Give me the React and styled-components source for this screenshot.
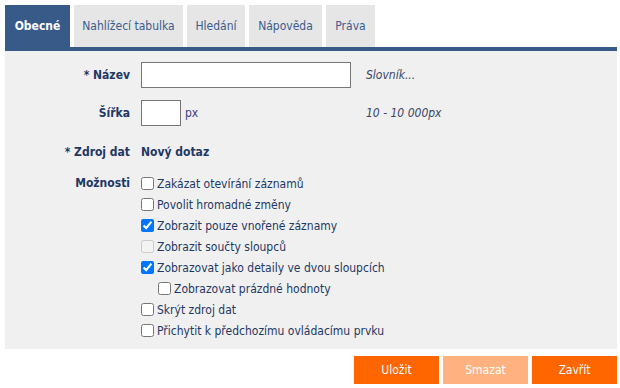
import React from "react";
import styled, { createGlobalStyle } from "styled-components";

const Global = createGlobalStyle`
  html, body { margin: 0; padding: 0; background: #ffffff; }
  body {
    font-family: "DejaVu Sans Condensed", "Liberation Sans", Arial, sans-serif;
    font-size: 12px;
    color: #1f3864;
  }
`;

const Page = styled.div`
  width: 612px;
  padding: 5px 3px 4px 5px;
`;

const TabStrip = styled.div`
  display: flex;
  gap: 4px;
  border-bottom: 4px solid #385a88;
`;

const Tab = styled.div`
  height: 42px;
  width: ${(p) => p.$w}px;
  flex: none;
  display: flex;
  align-items: center;
  justify-content: center;
  white-space: nowrap;
  box-sizing: border-box;
  background: ${(p) => (p.$active ? "#385a88" : "#e6e6e6")};
  color: ${(p) => (p.$active ? "#ffffff" : "#3b5c8c")};
  font-weight: ${(p) => (p.$active ? 700 : 400)};
`;

const Panel = styled.div`
  background: #f0f0f0;
  padding: 11px 0 8px 0;
  display: flex;
  flex-direction: column;
`;

const Row = styled.div`
  display: grid;
  grid-template-columns: 125px 1fr;
  column-gap: 11px;
  align-items: ${(p) => (p.$top ? "start" : "center")};
  min-height: 26px;
  margin-bottom: ${(p) => p.$mb || 0}px;
`;

const Label = styled.div`
  text-align: right;
  font-weight: 700;
  color: #1f3864;
  line-height: ${(p) => (p.$lh ? p.$lh + "px" : "normal")};
`;

const Field = styled.div`
  display: flex;
  align-items: center;
`;

const FieldBox = styled.div`
  width: 210px;
  display: flex;
  align-items: center;
  gap: 4px;
`;

const TextInput = styled.input`
  width: ${(p) => p.$w}px;
  height: 26px;
  box-sizing: border-box;
  border: 1px solid #767676;
  background: #fff;
  margin: 0;
  padding: 2px 4px;
  font: inherit;
  outline: none;
`;

const Unit = styled.span`
  color: #3b3f8c;
`;

const Hint = styled.span`
  margin-left: 15px;
  font-style: italic;
  color: #3a4766;
`;

const Value = styled.span`
  font-weight: 700;
  color: #1f3864;
`;

const Options = styled.div`
  display: flex;
  flex-direction: column;
`;

const Option = styled.label`
  display: flex;
  align-items: center;
  height: 21px;
  padding-left: ${(p) => (p.$nested ? 17 : 0)}px;
  color: #1f3864;
  input {
    margin: 0 3px 0 0;
    width: 13px;
    height: 13px;
  }
`;

const Footer = styled.div`
  display: flex;
  justify-content: flex-end;
  gap: 4px;
  margin-top: 7px;
`;

const Button = styled.button`
  width: 85px;
  height: 28px;
  border: none;
  margin: 0;
  padding: 0;
  background: ${(p) => (p.$disabled ? "#ffb27f" : "#ff6600")};
  color: #ffffff;
  font: inherit;
  font-size: 12px;
`;

const options = [
  { t: "Zakázat otevírání záznamů" },
  { t: "Povolit hromadné změny" },
  { t: "Zobrazit pouze vnořené záznamy", c: true },
  { t: "Zobrazit součty sloupců", d: true },
  { t: "Zobrazovat jako detaily ve dvou sloupcích", c: true },
  { t: "Zobrazovat prázdné hodnoty", n: true },
  { t: "Skrýt zdroj dat" },
  { t: "Přichytit k předchozímu ovládacímu prvku" },
];

const tabs = [
  { t: "Obecné", w: 65, a: true },
  { t: "Nahlížecí tabulka", w: 109 },
  { t: "Hledání", w: 58 },
  { t: "Nápověda", w: 73 },
  { t: "Práva", w: 49 },
];

export default function App() {
  return (
    <>
      <Global />
      <Page>
        <TabStrip>
          {tabs.map((tab) => (
            <Tab key={tab.t} $active={tab.a} $w={tab.w}>
              {tab.t}
            </Tab>
          ))}
        </TabStrip>
        <Panel>
          <Row $mb={12}>
            <Label>* Název</Label>
            <Field>
              <FieldBox>
                <TextInput $w={210} />
              </FieldBox>
              <Hint>Slovník...</Hint>
            </Field>
          </Row>
          <Row $mb={13}>
            <Label>Šířka</Label>
            <Field>
              <FieldBox>
                <TextInput $w={40} />
                <Unit>px</Unit>
              </FieldBox>
              <Hint>10 - 10 000px</Hint>
            </Field>
          </Row>
          <Row $mb={8}>
            <Label>* Zdroj dat</Label>
            <Field>
              <Value>Nový dotaz</Value>
            </Field>
          </Row>
          <Row $top>
            <Label $lh={21}>Možnosti</Label>
            <Options>
              {options.map((o, i) => (
                <Option key={i} $nested={o.n}>
                  <input type="checkbox" defaultChecked={!!o.c} disabled={!!o.d} />
                  {o.t}
                </Option>
              ))}
            </Options>
          </Row>
        </Panel>
        <Footer>
          <Button>Uložit</Button>
          <Button $disabled>Smazat</Button>
          <Button>Zavřít</Button>
        </Footer>
      </Page>
    </>
  );
}
